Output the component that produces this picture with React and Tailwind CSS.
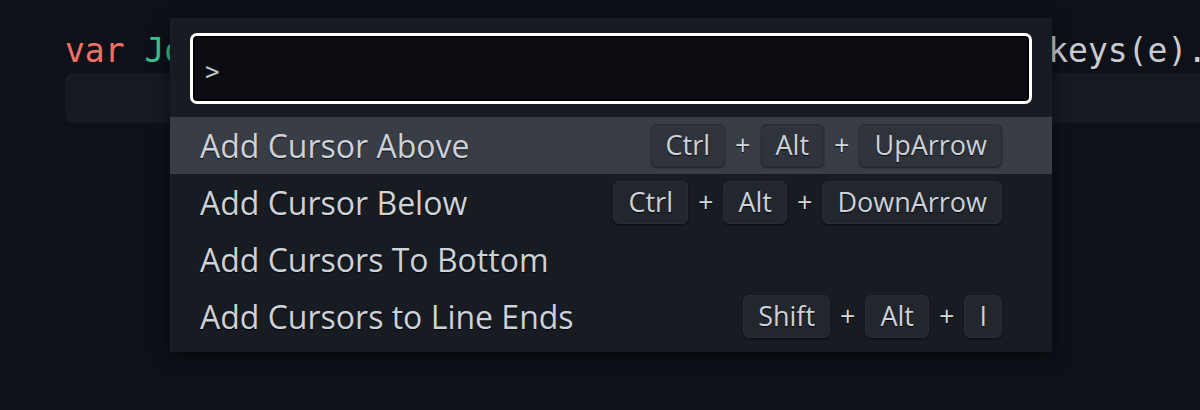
import React from "react";

const rows = [
  { label: "Add Cursor Above", keys: ["Ctrl", "Alt", "UpArrow"], active: true },
  { label: "Add Cursor Below", keys: ["Ctrl", "Alt", "DownArrow"] },
  { label: "Add Cursors To Bottom", keys: [] },
  { label: "Add Cursors to Line Ends", keys: ["Shift", "Alt", "I"] },
];

function Key({ k, active }) {
  return (
    <span
      className={
        "flex h-[43px] items-center rounded-[6px] border px-[14px] " +
        (active
          ? "border-[#2a2d34] bg-[#2f333b] shadow-[0_1px_2px_rgba(0,0,0,0.5)]"
          : "border-[#2a2d34] bg-[#22262d] shadow-[0_1px_2px_rgba(0,0,0,0.6)]")
      }
    >
      {k}
    </span>
  );
}

export default function App() {
  return (
    <div className="relative h-[410px] w-[1200px] overflow-hidden bg-[#0e1118]">
      <div
        className="pl-[65px] pt-[31px] text-[33px] leading-[40px]"
        style={{ fontFamily: '"DejaVu Sans Mono", monospace' }}
      >
        <div className="flex whitespace-nowrap">
          <span className="text-[#f47067]">var</span>
          <span>&nbsp;</span>
          <span className="text-[#3ec193]">Jo</span>
          <span className="ml-[864px] text-[#c8ccd2]">keys(e).</span>
        </div>
        <div className="mt-[2px] h-[50px] w-[1200px] rounded-[8px] bg-[#161a21]" />
      </div>

      <div
        className="absolute left-[170px] top-[18px] flex h-[334px] w-[882px] flex-col bg-[#171b22] pt-[15px] pb-[7px] shadow-[0_4px_16px_rgba(0,0,0,0.55)]"
        style={{ fontFamily: '"Open Sans", "Noto Sans", sans-serif' }}
      >
        <div className="mx-[20px] flex h-[71px] items-center rounded-[7px] border-[3px] border-white bg-[#0b0d12] pl-[12px] shadow-[inset_0_0_0_2px_#000]">
          <span
            className="mt-[6px] text-[24px] text-[#c0c4cb]"
            style={{ fontFamily: '"DejaVu Sans Mono", monospace' }}
          >
            &gt;
          </span>
        </div>
        <div className="mt-[13px] flex flex-col">
          {rows.map((r) => (
            <div
              key={r.label}
              className={
                "flex h-[57px] items-center justify-between pl-[30px] pr-[50px] text-[#cdd1d8] [text-shadow:0_1px_1px_rgba(0,0,0,0.8)] " +
                (r.active ? "bg-[#393d46]" : "")
              }
            >
              <span className="text-[32px] font-medium">{r.label}</span>
              <div className="flex items-center text-[27px] font-medium">
                {r.keys.map((k, i) => (
                  <React.Fragment key={k + i}>
                    {i > 0 && <span className="mx-[10px] text-[27px] text-[#d6d9de]">+</span>}
                    <Key k={k} active={r.active} />
                  </React.Fragment>
                ))}
              </div>
            </div>
          ))}
        </div>
      </div>
    </div>
  );
}
